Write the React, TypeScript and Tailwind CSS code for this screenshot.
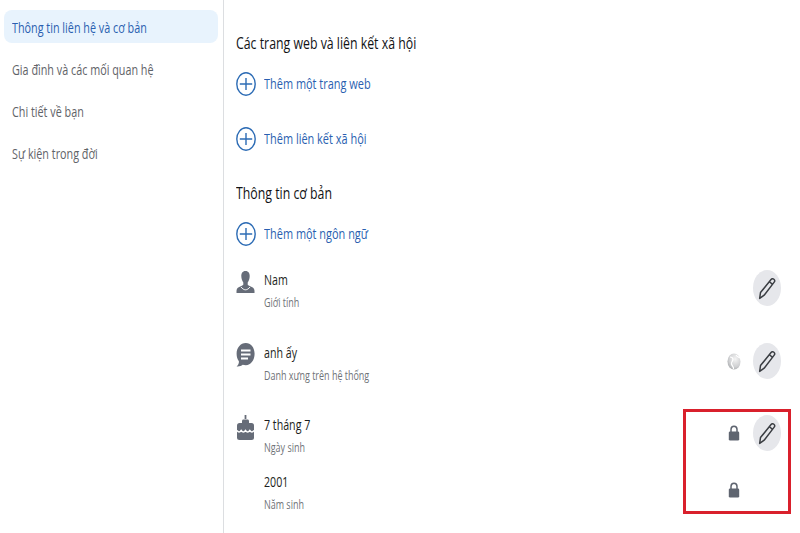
const font = "font-['Open_Sans',sans-serif]";

function Squeezed({ className, children }: { className: string; children: React.ReactNode }) {
  return (
    <span className={`inline-block origin-left whitespace-nowrap ${font} ${className}`}>
      {children}
    </span>
  );
}

function PlusCircle() {
  return (
    <svg width="20" height="24" viewBox="0 0 20 24" className="shrink-0">
      <ellipse cx="10" cy="12" rx="9.2" ry="11.2" fill="none" stroke="#2d6cb5" strokeWidth="1.4" />
      <path d="M10 6v12M3.8 12h12.4" stroke="#2d6cb5" strokeWidth="1.4" />
    </svg>
  );
}

function AddRow({ label, className }: { label: string; className: string }) {
  return (
    <div className={`flex h-[36px] items-center gap-[8px] ${className}`}>
      <PlusCircle />
      <Squeezed className="scale-x-[0.73] pb-[2px] text-[15px] font-medium text-[#2a5fb0]">{label}</Squeezed>
    </div>
  );
}

function PencilButton() {
  return (
    <div className="flex h-[36px] w-[28px] items-center justify-center rounded-[50%] bg-[#e6e7eb]">
      <svg width="19" height="23" viewBox="0 0 18 22" fill="none" stroke="#3a3d42" strokeWidth="1.4" strokeLinejoin="round">
        <path d="M1.500 20.500l.8-5.600L12.400 2.400c.7-.9 1.900-1 2.700-.3.800.7 1 1.900.3 2.800L5.800 17.400z" />
        <path d="M10.800 4.500l3.100 2.600" />
      </svg>
    </div>
  );
}

function Lock() {
  return (
    <svg width="12" height="16" viewBox="0 0 12 16">
      <path d="M3 7V4.500a3 3.300 0 0 1 6 0V7" fill="none" stroke="#5f6570" strokeWidth="1.500" />
      <rect x="0.800" y="6.500" width="10.400" height="9" rx="1.300" fill="#5f6570" />
    </svg>
  );
}

function Globe() {
  return (
    <svg width="14" height="17" viewBox="0 0 14 17">
      <defs>
        <radialGradient id="globe" cx="0.6" cy="0.35" r="0.8">
          <stop offset="0" stopColor="#f4f4f4" />
          <stop offset="0.6" stopColor="#cfd0d2" />
          <stop offset="1" stopColor="#9a9c9f" />
        </radialGradient>
      </defs>
      <ellipse cx="7" cy="8.500" rx="6.500" ry="8" fill="url(#globe)" />
      <path d="M3 4c2 0 3 1 3 2.500S4 9 4.500 11 7 14 6.500 16M9 2c1 2 3 2 4 3" fill="none" stroke="#fff" strokeWidth="1.200" />
    </svg>
  );
}

function PersonIcon() {
  return (
    <svg width="19" height="22" viewBox="0 0 19 24" preserveAspectRatio="none" className="mt-[1px]">
      <path d="M9.500 0C6.400 0 5.300 2.600 5.300 5.500c0 3 1 5.500 2 7v2.300c0 .7-1 1.200-2.500 1.800C2.600 17.500.6 18.300.5 21.500V24h18v-2.500c-.1-3.200-2.100-4-4.300-4.900-1.500-.6-2.500-1.100-2.500-1.800v-2.300c1-1.500 2-4 2-7C13.700 2.600 12.600 0 9.500 0z" fill="#666c78" />
      <path d="M5 17.500c1.500 2 3 3 4.500 3s3-1 4.500-3" fill="none" stroke="#fff" strokeWidth="1" />
    </svg>
  );
}

function BubbleIcon() {
  return (
    <svg width="19" height="24" viewBox="0 0 19 24">
      <path d="M9.800 0C4.500 0 .6 4.800.6 10.800c0 3 .9 5.500 2.300 7.500.3 2-.9 4.400-2.300 5.200 2.500.3 4.700-.6 6.100-1.700 1 .3 2 .4 3.100.4 5 0 8.800-5 8.800-11.400S14.800 0 9.800 0z" fill="#666c78" />
      <path d="M5 7.600h9.500M5 11.600h9.500M5 15.600h7" stroke="#fff" strokeWidth="2" />
    </svg>
  );
}

function CakeIcon() {
  return (
    <svg width="19" height="25" viewBox="0 0 19 25" fill="#666c78">
      <rect x="8.600" y="0" width="1.800" height="4" />
      <path d="M6 8V6c0-.9.6-1.500 1.500-1.500h4c.9 0 1.500.6 1.500 1.500v2z" />
      <rect x="1" y="8" width="17" height="17" rx="2.500" />
      <path d="M1 15.500c1.400 2 2.800 2 4.200 0 1.400 2 2.900 2 4.300 0 1.400 2 2.900 2 4.300 0 1.400 2 2.800 2 4.200 0" fill="none" stroke="#fff" strokeWidth="1.500" />
    </svg>
  );
}

function InfoRow({
  icon,
  title,
  sub,
  className,
  side,
  edit,
}: {
  icon?: React.ReactNode;
  title: string;
  sub: string;
  className: string;
  side?: React.ReactNode;
  edit?: boolean;
}) {
  return (
    <div className={`flex h-[46px] items-start ${className}`}>
      <div className="w-[28px] shrink-0 pt-[2px]">{icon}</div>
      <div className="flex-1">
        <div className="flex h-[23px] items-center">
          <Squeezed className="scale-x-[0.71] text-[15px] text-[#1c1e21]">{title}</Squeezed>
        </div>
        <div className="flex h-[23px] items-center">
          <Squeezed className="scale-x-[0.69] text-[13px] text-[#6f7378]">{sub}</Squeezed>
        </div>
      </div>
      <div className="flex h-[40px] items-center gap-[12px]">
        <div className="flex w-[14px] justify-center">{side}</div>
        {edit ? <PencilButton /> : <div className="w-[28px]" />}
      </div>
    </div>
  );
}

const menu = ["Gia đình và các mối quan hệ", "Chi tiết về bạn", "Sự kiện trong đời"];

export default function App() {
  return (
    <div className="relative flex h-[533px] w-[800px] overflow-hidden bg-white">
      {/* Sidebar */}
      <div className="w-[224px] shrink-0 border-r border-[#dcdee1] pt-[10px] pl-[4px] pr-[5px]">
        <div className="flex h-[33px] items-center rounded-[8px] bg-[#e8f3fd] pl-[8px]">
          <Squeezed className="scale-x-[0.72] pt-[2px] text-[15px] font-medium text-[#2a5fb0]">Thông tin liên hệ và cơ bản</Squeezed>
        </div>
        {menu.map((item) => (
          <div key={item} className="mt-[9px] flex h-[33px] items-center pl-[8px]">
            <Squeezed className="scale-x-[0.72] pt-[2px] text-[15px] font-medium text-[#5f6368]">{item}</Squeezed>
          </div>
        ))}
      </div>

      {/* Main column */}
      <div className="flex-1 pt-[30px] pl-[12px] pr-[19px]">
        <div className="flex h-[26px] items-center">
          <Squeezed className="scale-x-[0.77] text-[16px] font-medium text-[#111214]">Các trang web và liên kết xã hội</Squeezed>
        </div>
        <AddRow label="Thêm một trang web" className="mt-[10px]" />
        <AddRow label="Thêm liên kết xã hội" className="mt-[19px]" />
        <div className="mt-[23px] flex h-[26px] items-center">
          <Squeezed className="scale-x-[0.77] text-[16px] font-medium text-[#111214]">Thông tin cơ bản</Squeezed>
        </div>
        <AddRow label="Thêm một ngôn ngữ" className="mt-[10px]" />

        <InfoRow className="mt-[16px]" icon={<PersonIcon />} title="Nam" sub="Giới tính" edit />
        <InfoRow className="mt-[27px]" icon={<BubbleIcon />} title="anh ấy" sub="Danh xưng trên hệ thống" side={<Globe />} edit />
        <InfoRow className="mt-[26px]" icon={<CakeIcon />} title="7 tháng 7" sub="Ngày sinh" side={<Lock />} edit />
        <InfoRow className="mt-[11px]" title="2001" sub="Năm sinh" side={<Lock />} />
      </div>

      {/* Red highlight */}
      <div className="absolute left-[683px] top-[409px] h-[105px] w-[108px] border-[3px] border-[#d9202c]" />
    </div>
  );
}
